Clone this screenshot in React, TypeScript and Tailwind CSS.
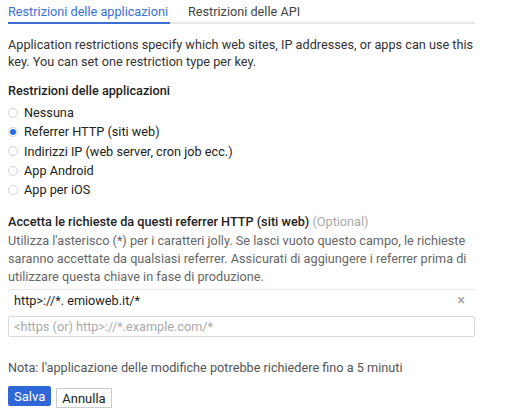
import { useState } from 'react';

const options = [
  'Nessuna',
  'Referrer HTTP (siti web)',
  'Indirizzi IP (web server, cron job ecc.)',
  'App Android',
  'App per iOS',
];

function Radio({ checked }: { checked: boolean }) {
  return (
    <span className="flex h-[10px] w-[10px] shrink-0 items-center justify-center rounded-full border border-[#d6d6d6] bg-white">
      {checked && <span className="h-[6px] w-[6px] rounded-full bg-[#2a6ae0]" />}
    </span>
  );
}

export default function App() {
  const [selected, setSelected] = useState(1);
  const [tab, setTab] = useState(0);

  return (
    <div className="h-[416px] w-[508px] overflow-hidden bg-white font-['Roboto',sans-serif] text-[12.7px] text-[#222]">
      <div className="ml-2 w-[467px]">
        <div className="flex h-[24px] border-b-2 border-[#e8e8e8]">
          <button
            onClick={() => setTab(0)}
            className={`-mb-[2px] border-b-2 pr-[2px] leading-[23px] ${tab === 0 ? 'border-[#3b6fd6] text-[#3b6fd6]' : 'border-transparent text-[#444]'}`}
          >
            Restrizioni delle applicazioni
          </button>
          <button
            onClick={() => setTab(1)}
            className={`-mb-[2px] ml-[18px] border-b-2 leading-[23px] ${tab === 1 ? 'border-[#3b6fd6] text-[#3b6fd6]' : 'border-transparent text-[#444]'}`}
          >
            Restrizioni delle API
          </button>
        </div>

        <p className="mt-[12px] leading-[17px] text-[#333]">
          Application restrictions specify which web sites, IP addresses, or apps can use this key. You can set one restriction type per key.
        </p>

        <h3 className="mt-[12px] font-medium leading-[17px] text-[#222]">Restrizioni delle applicazioni</h3>
        <div className="mt-[4px] flex flex-col">
          {options.map((o, i) => (
            <label key={o} onClick={() => setSelected(i)} className="flex h-[19.3px] cursor-pointer items-center gap-[6px]">
              <Radio checked={selected === i} />
              <span>{o}</span>
            </label>
          ))}
        </div>

        <h3 className="mt-[14px] font-medium leading-[17px]">
          Accetta le richieste da questi referrer HTTP (siti web){' '}
          <span className="font-normal text-[#aaa]">(Optional)</span>
        </h3>
        <p className="mt-[2px] leading-[18px] text-[#666]">
          Utilizza l'asterisco (*) per i caratteri jolly. Se lasci vuoto questo campo, le richieste saranno accettate da qualsiasi referrer. Assicurati di aggiungere i referrer prima di utilizzare questa chiave in fase di produzione.
        </p>

        <div className="mt-[3px] border-t border-[#e8e8e8]">
          <div className="flex h-[21px] items-center justify-between pl-[6px] pr-[10px]">
            <span className="text-[#222]">http&gt;://*. emioweb.it/*</span>
            <span className="text-[14px] text-[#999]">×</span>
          </div>
          <input
            className="mt-[5px] h-[21px] w-full rounded-[2px] border border-[#d9d9d9] px-[5px] text-[12.7px] outline-none placeholder:text-[#aaa]"
            placeholder="<https (or) http>://*.example.com/*"
          />
        </div>

        <p className="mt-[22px] leading-[17px] text-[#555]">
          Nota: l'applicazione delle modifiche potrebbe richiedere fino a 5 minuti
        </p>

        <div className="mt-[10px] flex items-start gap-[5px]">
          <button className="h-[20px] rounded-[2px] bg-[#2f67d8] px-[6px] text-[13px] text-white">Salva</button>
          <button className="mt-[2px] h-[20px] border border-[#ccc] bg-white px-[5px] text-[13px] text-[#222]">Annulla</button>
        </div>
      </div>
    </div>
  );
}
